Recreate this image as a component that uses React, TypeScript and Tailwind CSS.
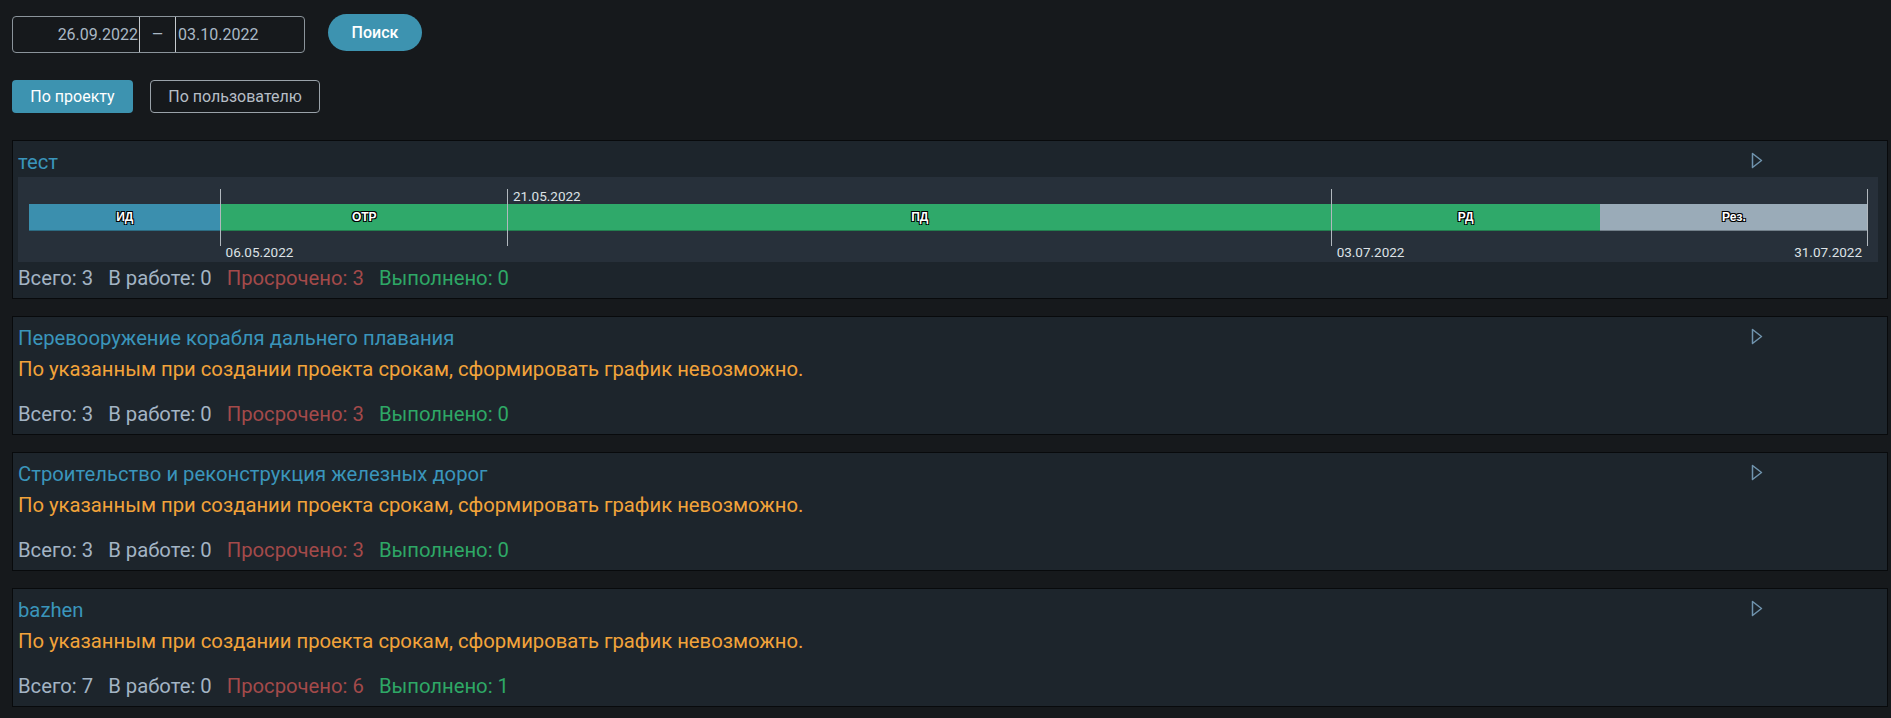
import React from 'react';

type Project = {
  name: string;
  total: number;
  inWork: number;
  overdue: number;
  done: number;
  chart?: boolean;
};

const projects: Project[] = [
  { name: 'тест', total: 3, inWork: 0, overdue: 3, done: 0, chart: true },
  { name: 'Перевооружение корабля дальнего плавания', total: 3, inWork: 0, overdue: 3, done: 0 },
  { name: 'Строительство и реконструкция железных дорог', total: 3, inWork: 0, overdue: 3, done: 0 },
  { name: 'bazhen', total: 7, inWork: 0, overdue: 6, done: 1 },
];

const stages = [
  { label: 'ИД', days: 10, color: 'bg-[#3b8fae]' },
  { label: 'ОТР', days: 15, color: 'bg-[#2fa96a]' },
  { label: 'ПД', days: 43, color: 'bg-[#2fa96a]' },
  { label: 'РД', days: 14, color: 'bg-[#2fa96a]' },
  { label: 'Рез.', days: 14, color: 'bg-[#9aabb8]' },
];

const totalDays = 96;

const markers = [
  { date: '06.05.2022', day: 10, pos: 'bottom' },
  { date: '21.05.2022', day: 25, pos: 'top' },
  { date: '03.07.2022', day: 68, pos: 'bottom' },
  { date: '31.07.2022', day: 96, pos: 'end' },
];

const labelPos: Record<string, string> = {
  top: 'left-[6px] top-[-1px]',
  bottom: 'left-[6px] top-[55px]',
  end: 'right-[6px] top-[55px]',
};

function Timeline() {
  return (
    <div className="mt-px h-[85px] bg-[#27303a] pl-[11px] pr-[10px] pt-[27px]">
      <div className="relative">
        <div className="flex h-[27px]">
          {stages.map((s) => (
            <div
              key={s.label}
              className={`${s.color} flex items-center justify-center border-b border-black/25 font-['Liberation_Sans',sans-serif] text-[12px] font-bold text-white [text-shadow:-1px_-1px_0_#000,1px_-1px_0_#000,-1px_1px_0_#000,1px_1px_0_#000]`}
              style={{ width: `${(s.days / totalDays) * 100}%` }}
            >
              {s.label}
            </div>
          ))}
        </div>

        {/* date markers */}
        {markers.map((m) => (
          <div
            key={m.date}
            className="absolute top-[-15px] h-[57px] w-px bg-[#b1b8be]"
            style={{ left: `calc(${(m.day / totalDays) * 100}% - 1px)` }}
          >
            <span
              className={`absolute ${labelPos[m.pos]} whitespace-nowrap text-[13.5px] leading-[16px] text-[#dde2e6]`}
            >
              {m.date}
            </span>
          </div>
        ))}
      </div>
    </div>
  );
}

function ProjectCard({ p }: { p: Project }) {
  return (
    <div className="border border-[#080a0c] bg-[#1d252c] pt-[8px] pb-[6px] pl-[5px] pr-[9px]">
      <div className="flex items-start">
        <span className="flex-1 text-[20.25px] leading-[27px] text-[#3a95bb]">{p.name}</span>
        <svg width="12" height="17" viewBox="0 0 12 17" className="mt-[3px] mr-[115px]">
          <polygon
            points="1.5,1.5 10.5,8.5 1.5,15.5"
            fill="none"
            stroke="#7094ae"
            strokeWidth="1.5"
            strokeLinejoin="round"
          />
        </svg>
      </div>

      {p.chart ? (
        <Timeline />
      ) : (
        <div className="mt-1 text-[20.25px] leading-[27px] text-[#f2a33a]">
          По указанным при создании проекта срокам, сформировать график невозможно.
        </div>
      )}

      <div
        className={`${p.chart ? 'mt-[3px]' : 'mt-[18px]'} flex gap-[15px] text-[20.25px] leading-[27px]`}
      >
        <span className="text-[#a3b4c4]">Всего: {p.total}</span>
        <span className="text-[#a3b4c4]">В работе: {p.inWork}</span>
        <span className="text-[#a34a4a]">Просрочено: {p.overdue}</span>
        <span className="text-[#2ea866]">Выполнено: {p.done}</span>
      </div>
    </div>
  );
}

export default function App() {
  return (
    <div className="min-h-screen bg-[#16191c] pt-[14px] pl-3 pr-[3px] font-['Roboto',sans-serif]">
      {/* date range + search */}
      <div className="flex items-start">
        <div className="mt-[2px] flex h-[37px] w-[293px] rounded-[4px] border border-[#8b949b] text-[16px] text-[#aab8c5]">
          <div className="flex w-[126px] items-center justify-end pr-[1px]">26.09.2022</div>
          <div className="flex w-[37px] items-center justify-center border-x border-[#c6cbcf] text-[14px]">
            —
          </div>
          <div className="flex flex-1 items-center pl-[2px]">03.10.2022</div>
        </div>
        <button className="ml-[23px] h-[37px] w-[94px] rounded-full bg-[#3d93b0] text-[16px] font-medium text-white">
          Поиск
        </button>
      </div>

      {/* mode tabs */}
      <div className="mt-[27px] flex gap-[17px]">
        <button className="h-[33px] w-[121px] rounded-[4px] bg-[#3d93b0] text-[16px] text-white">
          По проекту
        </button>
        <button className="h-[33px] w-[170px] rounded-[4px] border border-[#9aa2a9] text-[16px] text-[#b6bec6]">
          По пользователю
        </button>
      </div>

      {/* projects */}
      <div className="mt-[27px] flex flex-col gap-[17px]">
        {projects.map((p) => (
          <ProjectCard key={p.name} p={p} />
        ))}
      </div>
    </div>
  );
}
